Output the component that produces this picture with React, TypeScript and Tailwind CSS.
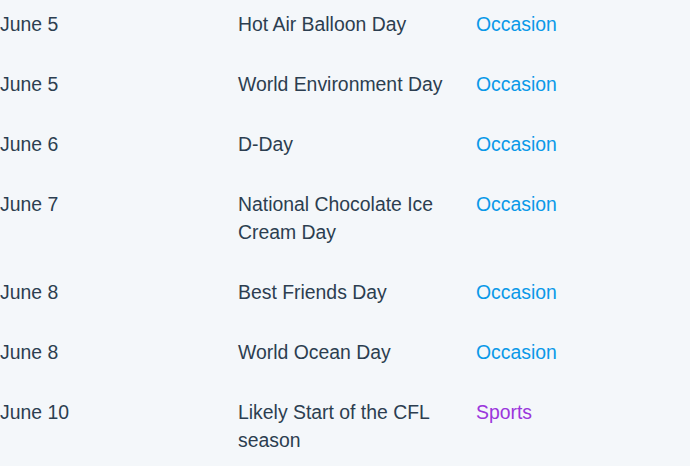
import React from "react";

interface Holiday {
  date: string;
  name: string;
  kind: "Occasion" | "Sports";
}

const holidays: Holiday[] = [
  { date: "June 5", name: "Hot Air Balloon Day", kind: "Occasion" },
  { date: "June 5", name: "World Environment Day", kind: "Occasion" },
  { date: "June 6", name: "D-Day", kind: "Occasion" },
  { date: "June 7", name: "National Chocolate Ice Cream Day", kind: "Occasion" },
  { date: "June 8", name: "Best Friends Day", kind: "Occasion" },
  { date: "June 8", name: "World Ocean Day", kind: "Occasion" },
  { date: "June 10", name: "Likely Start of the CFL season", kind: "Sports" },
];

export default function App() {
  return (
    <div
      className="min-h-screen w-full bg-[#f4f7fa] text-[19.4px] leading-[28px] text-[#2c3e50]"
      style={{ fontFamily: '"Liberation Sans", Arial, sans-serif' }}
    >
      <ul>
        {holidays.map((h, i) => (
          <li key={i} className="grid grid-cols-[238px_238px_1fr] pt-[10px] pb-[22px]">
            <span>{h.date}</span>
            <span className="pr-5">{h.name}</span>
            <span className={h.kind === "Sports" ? "text-[#9b36dc]" : "text-[#0a99e8]"}>
              {h.kind}
            </span>
          </li>
        ))}
      </ul>
    </div>
  );
}
